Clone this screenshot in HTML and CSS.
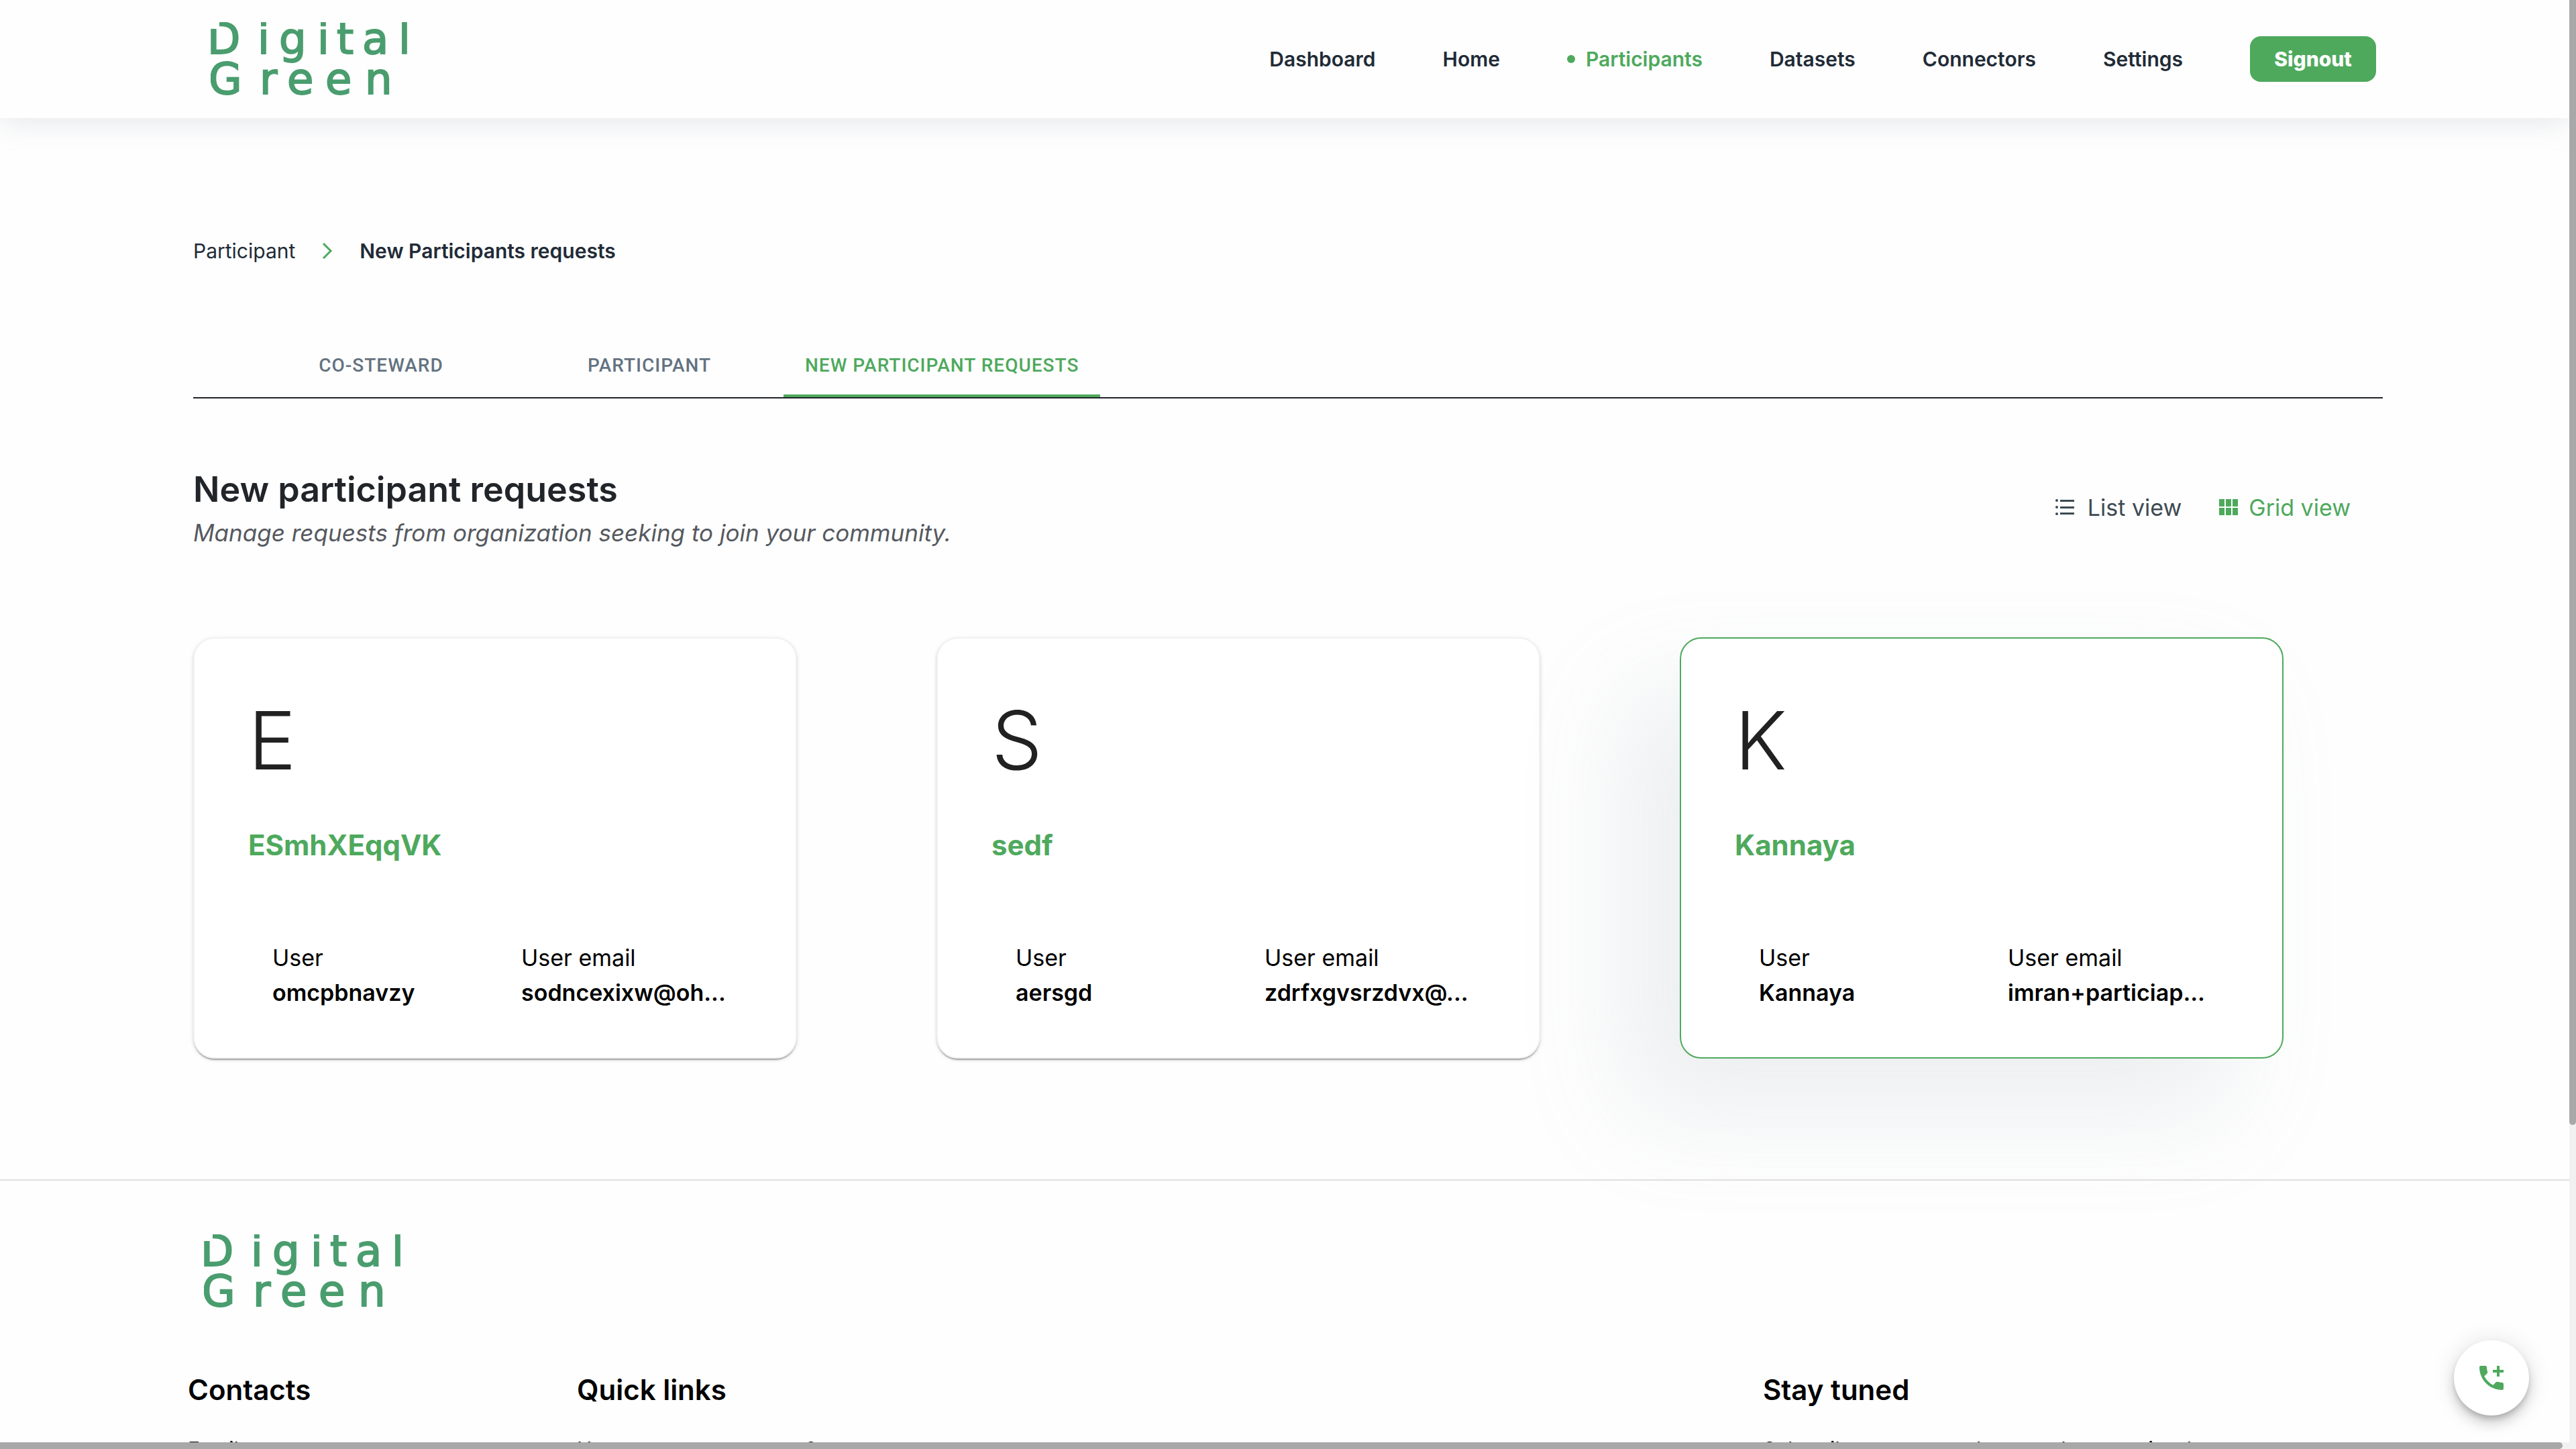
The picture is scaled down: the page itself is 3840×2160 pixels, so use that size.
FILE: index.html
```html
<!DOCTYPE html>
<html lang="en">
<head>
<meta charset="utf-8">
<title>New Participants requests</title>
<link rel="stylesheet" href="styles.css">
</head>
<body>
<header class="header">
  <a class="logo-link" href="#" aria-label="Digital Green">
    <svg class="logo" viewBox="0 0 300 110">
      <text x="-5 70 102 159 188 226 280" y="47">Digital</text>
      <text x="-3 73 114 171 230" y="107">Green</text>
      <path class="logo-cut" d="M-2 -2H13V10H-2ZM45 96H60V112H45Z"/>
    </svg>
  </a>
  <nav class="nav">
    <a href="#">Dashboard</a>
    <a href="#">Home</a>
    <a class="active" href="#">Participants</a>
    <a href="#">Datasets</a>
    <a href="#">Connectors</a>
    <a href="#">Settings</a>
    <button class="signout" type="button">Signout</button>
  </nav>
</header>

<main class="main">
  <nav class="crumbs" aria-label="Breadcrumb">
    <a href="#">Participant</a>
    <svg class="chevron" viewBox="0 0 16 24"><path d="M2 1L13 12L2 23"/></svg>
    <span class="current">New Participants requests</span>
  </nav>

  <div class="tabs" role="tablist">
    <button class="tab" role="tab" type="button">Co-Steward</button>
    <button class="tab" role="tab" type="button">Participant</button>
    <button class="tab selected" role="tab" type="button" aria-selected="true">New Participant requests</button>
  </div>

  <section class="heading">
    <div>
      <h1>New participant requests</h1>
      <p>Manage requests from organization seeking to join your community.</p>
    </div>
    <div class="views">
      <button class="view" type="button">
        <svg class="view-icon" viewBox="0 0 28 24"><circle cx="2" cy="2" r="2"/><circle cx="2" cy="12" r="2"/><circle cx="2" cy="22" r="2"/><path d="M7 1H28V4H7ZM7 11H28V14H7ZM7 20H28V23H7Z"/></svg>
        List view
      </button>
      <button class="view on" type="button">
        <svg class="view-icon" viewBox="0 0 28 24"><path d="M0 0H8V11H0ZM10 0H18V11H10ZM20 0H28V11H20ZM0 13H8V24H0ZM10 13H18V24H10ZM20 13H28V24H20Z"/></svg>
        Grid view
      </button>
    </div>
  </section>

  <section class="cards">
    <article class="card">
      <div class="initial">E</div>
      <h2>ESmhXEqqVK</h2>
      <dl>
        <div><dt>User</dt><dd>omcpbnavzy</dd></div>
        <div><dt>User email</dt><dd>sodncexixw@oh...</dd></div>
      </dl>
    </article>
    <article class="card">
      <div class="initial">S</div>
      <h2>sedf</h2>
      <dl>
        <div><dt>User</dt><dd>aersgd</dd></div>
        <div><dt>User email</dt><dd>zdrfxgvsrzdvx@...</dd></div>
      </dl>
    </article>
    <article class="card hovered">
      <div class="initial">K</div>
      <h2>Kannaya</h2>
      <dl>
        <div><dt>User</dt><dd>Kannaya</dd></div>
        <div><dt>User email</dt><dd>imran+particiap...</dd></div>
      </dl>
    </article>
  </section>
</main>

<footer class="footer">
  <a class="logo-link" href="#" aria-label="Digital Green">
    <svg class="logo" viewBox="0 0 300 110">
      <text x="-5 70 102 159 188 226 280" y="47">Digital</text>
      <text x="-3 73 114 171 230" y="107">Green</text>
      <path class="logo-cut" d="M-2 -2H13V10H-2ZM45 96H60V112H45Z"/>
    </svg>
  </a>
  <div class="footer-cols">
    <div><h3>Contacts</h3><p>Email</p></div>
    <div><h3>Quick links</h3><p>How to use our systems?</p></div>
    <div><h3>Stay tuned</h3><p>Subscribe to our newsletter and never miss the</p></div>
  </div>
</footer>

<button class="fab" type="button" aria-label="Add contact">
  <svg viewBox="0 0 24 24"><path d="M20 15.5c-1.25 0-2.45-.2-3.57-.57-.1-.03-.21-.05-.31-.05-.26 0-.51.1-.71.29l-2.2 2.2c-2.83-1.44-5.15-3.75-6.59-6.58l2.2-2.21c.28-.27.36-.66.25-1.01C8.7 6.45 8.5 5.25 8.5 4c0-.55-.45-1-1-1H4c-.55 0-1 .45-1 1 0 9.39 7.61 17 17 17 .55 0 1-.45 1-1v-3.5c0-.55-.45-1-1-1zM21 6h-3V3h-2v3h-3v2h3v3h2V8h3z"/></svg>
</button>
<div class="scroll-y"><div class="thumb-y"></div></div>
<div class="scroll-x"><div class="thumb-x"></div></div>
</body>
</html>
```
FILE: styles.css
```css
:root {
  --green: #4ea95d;
  --ink: #212b36;
  --font: Inter, "Noto Sans", sans-serif;
}
* { box-sizing: border-box; }
body {
  margin: 0;
  height: 100vh;
  overflow: hidden;
  padding-right: 10px;
  background: #fefefe;
  color: #000;
  font-family: var(--font);
}
a { color: inherit; text-decoration: none; }
button { border: 0; background: none; padding: 0; color: inherit; font-family: inherit; cursor: pointer; }
h1, h2, h3, p, dl, dd { margin: 0; }

.logo { display: block; width: 300px; height: 110px; }
.logo text { font-family: "DejaVu Sans", sans-serif; font-size: 64px; fill: #4a9d6e; stroke: #4a9d6e; stroke-width: 2px; }
.logo-cut { fill: #fefefe; }

.header {
  display: flex;
  align-items: center;
  justify-content: space-between;
  height: 176px;
  padding: 0 288px 0 314px;
  box-shadow: 0 6px 40px rgba(145, 158, 171, 0.24);
}
.nav { display: flex; align-items: center; gap: 100px; font-size: 30px; font-weight: 600; color: var(--ink); }
.nav .active { display: flex; align-items: center; gap: 16px; color: var(--green); }
.nav .active::before { content: ""; width: 12px; height: 12px; border-radius: 50%; background: var(--green); }
.signout { width: 188px; height: 68px; border-radius: 16px; background: var(--green); color: #fff; font-size: 30px; font-weight: 800; }

.main { padding: 176px 278px 180px 288px; }
.crumbs { display: flex; align-items: center; gap: 40px; height: 44px; font-size: 30px; color: var(--ink); }
.current { font-weight: 600; }
.chevron { width: 16px; height: 24px; fill: none; stroke: var(--green); stroke-width: 3px; }

.tabs { display: flex; margin-top: 100px; padding-left: 80px; border-bottom: 2px solid #212529; }
.tab {
  min-width: 400px;
  height: 96px;
  padding: 4px 32px 0;
  border-bottom: 4px solid transparent;
  color: #637381;
  font: 500 28px Roboto, sans-serif;
  letter-spacing: 1px;
  text-transform: uppercase;
}
.selected { color: var(--green); border-color: var(--green); }

.heading { display: flex; align-items: center; justify-content: space-between; margin-top: 100px; padding-right: 48px; }
h1 { color: #212529; font-size: 52px; font-weight: 600; line-height: 72px; }
.heading p { color: #55595f; font-size: 35px; font-style: italic; line-height: 56px; }
.views { display: flex; gap: 56px; padding-bottom: 4px; }
.view { display: flex; align-items: center; gap: 20px; color: #3d4a52; font-size: 34px; }
.view.on { gap: 16px; color: var(--green); }
.view-icon { width: 28px; height: 24px; fill: currentColor; }

.cards { display: grid; grid-template-columns: repeat(3, 1fr); gap: 208px; margin-top: 128px; padding-right: 148px; }
.card {
  padding: 84px 80px 70px;
  border: 2px solid #f2f2f2;
  border-radius: 32px;
  background: #fff;
  box-shadow: 0 4px 2px -2px rgba(0, 0, 0, 0.2), 0 2px 2px rgba(0, 0, 0, 0.14), 0 2px 6px rgba(0, 0, 0, 0.12);
}
.hovered { border-color: var(--green); box-shadow: -80px 80px 160px rgba(145, 158, 171, 0.16); }
.initial { color: #212121; font-size: 120px; font-weight: 300; line-height: 136px; }
h2 { margin-top: 60px; color: var(--green); font-size: 42px; font-weight: 700; line-height: 56px; }
dl { display: grid; grid-template-columns: 53% 1fr; margin-top: 114px; padding-left: 36px; font-size: 34px; line-height: 52px; }
dd { font-weight: 600; }

.footer { padding: 80px 278px 0 280px; border-top: 2px solid #e0e0e0; }
.footer .logo-link { display: block; padding-left: 24px; }
.footer-cols { display: grid; grid-template-columns: 580px 1fr 924px; margin-top: 90px; }
h3 { font-size: 42px; font-weight: 600; line-height: 64px; }
.footer p { margin-top: 32px; font-size: 30px; line-height: 48px; }

.fab {
  position: fixed;
  right: 70px;
  bottom: 50px;
  display: grid;
  place-items: center;
  width: 112px;
  height: 112px;
  border-radius: 50%;
  background: #fff;
  box-shadow: 0 6px 10px -2px rgba(0, 0, 0, 0.2), 0 12px 20px rgba(0, 0, 0, 0.14), 0 2px 36px rgba(0, 0, 0, 0.12);
}
.fab svg { width: 48px; height: 48px; fill: var(--green); }

.scroll-y { position: fixed; top: 0; right: 0; bottom: 10px; width: 10px; background: #f1f1f1; }
.thumb-y { height: 78%; border-radius: 0 0 6px 6px; background: #a8a8a8; }
.scroll-x { position: fixed; left: 0; right: 0; bottom: 0; height: 10px; padding-right: 20px; background: #f1f1f1; }
.thumb-x { height: 100%; border-radius: 0 6px 6px 0; background: #a8a8a8; }
```
